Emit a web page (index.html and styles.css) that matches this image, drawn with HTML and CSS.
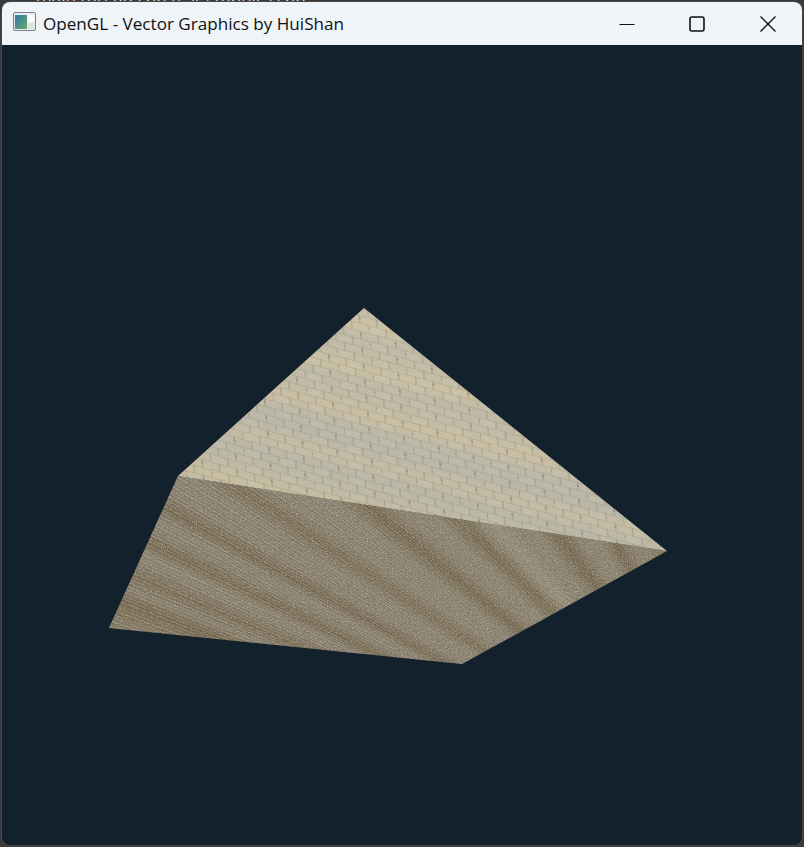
FILE: index.html
```html
<!DOCTYPE html>
<html lang="en">
<head>
<meta charset="utf-8">
<title>OpenGL - Vector Graphics by HuiShan</title>
<link rel="stylesheet" href="styles.css">
</head>
<body>
<div class="behind">main thread.cpp test graphics.cpp</div>
<main class="window">
  <header class="titlebar">
    <svg class="app-icon" width="24" height="20" viewBox="0 0 24 20" aria-hidden="true">
      <defs>
        <linearGradient id="iconFill" x1="0" y1="0" x2="1" y2="1">
          <stop offset="0" stop-color="#2f7aa5"/>
          <stop offset="1" stop-color="#6aa86a"/>
        </linearGradient>
      </defs>
      <rect x=".5" y=".5" width="22" height="18" rx="1.5" fill="#e9edf0" stroke="#78828c"/>
      <rect x="2" y="3" width="12" height="14" fill="url(#iconFill)"/>
      <rect x="15" y="3" width="6" height="7" fill="#fbfcfc"/>
      <rect x="15" y="11" width="6" height="6" fill="#dde4de"/>
    </svg>
    <h1 class="title">OpenGL - Vector Graphics by HuiShan</h1>
    <div class="controls">
      <button class="control" aria-label="Minimize">
        <svg width="16" height="16" viewBox="0 0 16 16"><path d="M0.5 8.5H15.5" stroke="#111" fill="none"/></svg>
      </button>
      <button class="control" aria-label="Maximize">
        <svg width="16" height="16" viewBox="0 0 16 16"><rect x="1" y="1" width="14" height="14" rx="2" stroke="#111" stroke-width="1.6" fill="none"/></svg>
      </button>
      <button class="control" aria-label="Close">
        <svg width="16" height="16" viewBox="0 0 16 16"><path d="M0.5 0.5L15.5 15.5M15.5 0.5L0.5 15.5" stroke="#111" stroke-width="1.3" fill="none"/></svg>
      </button>
    </div>
  </header>
  <section class="viewport">
    <div class="face-lower"></div>
    <svg class="scene" width="800" height="800" viewBox="2 45 800 800" aria-hidden="true">
      <defs>
        <linearGradient id="topBands" gradientUnits="userSpaceOnUse" x1="400" y1="300" x2="335" y2="560">
          <stop offset="0" stop-color="#c3bda8"/>
          <stop offset=".08" stop-color="#c5bea7"/>
          <stop offset=".13" stop-color="#cbc1a6"/>
          <stop offset=".17" stop-color="#c0bba7"/>
          <stop offset=".25" stop-color="#c3bca6"/>
          <stop offset=".29" stop-color="#cac0a3"/>
          <stop offset=".33" stop-color="#bebaa7"/>
          <stop offset=".4" stop-color="#c1bba6"/>
          <stop offset=".45" stop-color="#c9bea2"/>
          <stop offset=".5" stop-color="#bdb9a8"/>
          <stop offset=".57" stop-color="#bab7a8"/>
          <stop offset=".62" stop-color="#c5bca3"/>
          <stop offset=".67" stop-color="#bbb7a7"/>
          <stop offset=".75" stop-color="#bebaa4"/>
          <stop offset=".8" stop-color="#c7bda0"/>
          <stop offset=".86" stop-color="#bfb9a3"/>
          <stop offset=".93" stop-color="#c6bc9d"/>
          <stop offset="1" stop-color="#c0b496"/>
        </linearGradient>
        <pattern id="bricks" patternUnits="userSpaceOnUse" width="36" height="15" patternTransform="translate(178 476) rotate(15) skewX(20)">
          <rect x="0" y="1" width="17" height="6.5" fill="#fff" fill-opacity=".04"/>
          <rect x="9" y="8.5" width="17" height="6.5" fill="#fff" fill-opacity=".02"/>
          <path d="M0 0.5H36M0 8H36" stroke="#8d8670" stroke-opacity=".3" stroke-width=".9" fill="none"/>
          <path d="M0 0V7.5M18 0V7.5M9 7.5V15M27 7.5V15" stroke="#7b7360" stroke-opacity=".5" stroke-width=".9" fill="none"/>
          <path d="M0 2.5V4M27 10V11.5" stroke="#3f392c" stroke-opacity=".6" stroke-width="1" fill="none"/>
        </pattern>
        <filter id="grainDark" x="0" y="0" width="100%" height="100%">
          <feTurbulence type="fractalNoise" baseFrequency=".85" numOctaves="2" seed="4"/>
          <feColorMatrix type="matrix" values="0 0 0 0 .2  0 0 0 0 .18  0 0 0 0 .13  1.2 0 0 0 -.45"/>
        </filter>
        <filter id="grainLight" x="0" y="0" width="100%" height="100%">
          <feTurbulence type="fractalNoise" baseFrequency=".8" numOctaves="2" seed="11"/>
          <feColorMatrix type="matrix" values="0 0 0 0 .85  0 0 0 0 .78  0 0 0 0 .6  1 0 0 0 -.47"/>
        </filter>
        <clipPath id="lowerClip"><polygon points="178,476 667,551 462,664 109,628"/></clipPath>
      </defs>
      <g clip-path="url(#lowerClip)">
        <rect x="100" y="470" width="580" height="200" filter="url(#grainDark)"/>
        <rect x="100" y="470" width="580" height="200" filter="url(#grainLight)"/>
      </g>
      <polygon points="364,308 178,476 667,551" fill="url(#topBands)"/>
      <polygon points="364,308 178,476 667,551" fill="url(#bricks)"/>
    </svg>
  </section>
</main>
</body>
</html>
```
FILE: styles.css
```css
* { box-sizing: border-box; }
html, body { margin: 0; height: 100%; }
body {
  width: 804px;
  height: 847px;
  overflow: hidden;
  position: relative;
  background: #3a3a3c;
  font-family: "Open Sans", "Noto Sans", sans-serif;
}
.behind {
  position: absolute;
  left: 36px;
  top: -10px;
  color: #d5d5d5;
  font-size: 17px;
  line-height: 14px;
  white-space: nowrap;
}
.window {
  position: absolute;
  left: 2px;
  top: 2px;
  width: 800px;
  height: 843px;
  border-radius: 8px;
  overflow: hidden;
  display: flex;
  flex-direction: column;
  box-shadow: 0 0 0 1px #4a4846;
}
.titlebar {
  height: 43px;
  flex: none;
  display: flex;
  align-items: center;
  background: #eff4f9;
  padding-left: 11px;
}
.app-icon { flex: none; margin-top: -3px; }
.title {
  margin: -1px 0 0 6px;
  font-family: "Open Sans", "Noto Sans", sans-serif;
  font-weight: 400;
  font-size: 17.1px;
  color: #111;
  white-space: nowrap;
}
.controls { margin-left: auto; display: flex; margin-right: -1px; }
.control {
  width: 70.5px;
  height: 43px;
  display: flex;
  align-items: center;
  justify-content: center;
  padding: 0;
  background: none;
  border: 0;
}
.viewport {
  flex: 1;
  position: relative;
  background: #13212d;
}
.face-lower {
  position: absolute;
  inset: 0;
  clip-path: polygon(176px 431px, 665px 506px, 460px 619px, 107px 583px);
  background:
    repeating-conic-gradient(from 270deg at 798px 815px,
      rgba(255,240,200,.12) 0deg .1deg,
      rgba(40,30,15,.13) .1deg .27deg,
      rgba(220,205,170,.08) .27deg .36deg,
      rgba(40,30,15,.08) .36deg .53deg,
      rgba(255,240,200,.04) .53deg .62deg,
      rgba(40,30,15,.12) .62deg .83deg),
    conic-gradient(from 270deg at 798px 815px,
      #8f8675 18deg, #82765f 20deg, #77694f 20.9deg, #8f8675 22deg,
      #7d705a 23.1deg, #8f8675 24.4deg, #918979 25deg, #7a6c54 25.9deg,
      #8f8675 27.2deg, #908878 28deg, #796b55 29deg, #8f8575 30.2deg,
      #908878 32deg, #7d7059 33.5deg, #908777 35deg, #908878 37.5deg,
      #77694e 39.3deg, #8f8576 41deg, #928a7a 43deg, #786a50 45deg,
      #948c7c 46.6deg, #9d9584 47.6deg, #8f8575 49.5deg, #908777 51deg,
      #75684f 53.4deg, #8f8575 55.5deg, #928a7a 57.5deg, #786b53 59.7deg,
      #8f8575 62deg, #847860 66deg, #8f8575 70deg);
}
.scene { position: absolute; left: 0; top: 0; display: block; }
```
